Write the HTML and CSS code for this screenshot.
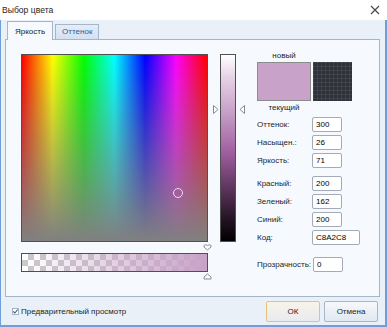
FILE: index.html
```html
<!DOCTYPE html>
<html lang="ru">
<head>
    <meta charset="UTF-8">
    <title>Выбор цвета</title>
    <link rel="stylesheet" href="styles.css">
</head>
<body>
    <div class="dialog">
        <div class="titlebar">
            <span class="title">Выбор цвета</span>
            <svg class="close" width="10" height="10" viewBox="0 0 10 10">
                <path d="M1 1 L9 9 M9 1 L1 9" stroke="#4a4a4a" stroke-width="1.2" fill="none"/>
            </svg>
        </div>

        <div class="window">
            <!-- Tabs -->
            <div class="tabs">
                <div class="tab active">Яркость</div>
                <div class="tab">Оттенок</div>
            </div>

            <div class="panel">
                <!-- Spectrum + alpha -->
                <div class="picker-col">
                    <div class="spectrum">
                        <span class="cursor"></span>
                    </div>
                    <div class="marker-row">
                        <svg class="marker-down" width="9" height="7" viewBox="0 0 9 7">
                            <path d="M1 1.5 Q2.5 0 4.5 1.5 Q6.5 0 8 1.5 L8 3 L4.5 6 L1 3 Z" stroke="#8a8a8a" fill="#fff"/>
                        </svg>
                    </div>
                    <div class="alpha"><div class="alpha-fill"></div></div>
                    <div class="marker-row">
                        <svg class="marker-up" width="9" height="7" viewBox="0 0 9 7">
                            <path d="M1 6 L8 6 L8 4 L4.5 1 L1 4 Z" stroke="#8a8a8a" fill="#fff"/>
                        </svg>
                    </div>
                </div>

                <!-- Luminance bar -->
                <div class="lum">
                    <svg class="lum-mark left" width="6" height="9" viewBox="0 0 6 9">
                        <path d="M0.5 0.5 L5 4.5 L0.5 8.5 Z" stroke="#8a8a8a" fill="#fff"/>
                    </svg>
                    <svg class="lum-mark right" width="6" height="9" viewBox="0 0 6 9">
                        <path d="M5.5 0.5 L1 4.5 L5.5 8.5 Z" stroke="#8a8a8a" fill="#fff"/>
                    </svg>
                </div>

                <!-- Values -->
                <div class="info-col">
                    <div class="swatch-label">новый</div>
                    <div class="swatches">
                        <div class="swatch new"></div>
                        <div class="swatch current"></div>
                    </div>
                    <div class="swatch-label">текущий</div>

                    <div class="fields">
                        <div class="row"><label>Оттенок:</label><input type="text" value="300"></div>
                        <div class="row"><label>Насыщен.:</label><input type="text" value="26"></div>
                        <div class="row"><label>Яркость:</label><input type="text" value="71"></div>
                        <div class="row group"><label>Красный:</label><input type="text" value="200"></div>
                        <div class="row"><label>Зеленый:</label><input type="text" value="162"></div>
                        <div class="row"><label>Синий:</label><input type="text" value="200"></div>
                        <div class="row"><label>Код:</label><input type="text" class="wide" value="C8A2C8"></div>
                        <div class="row group-wide"><label>Прозрачность:</label><input type="text" value="0"></div>
                    </div>
                </div>
            </div>

            <!-- Footer -->
            <div class="footer">
                <label class="preview"><span class="check"><svg width="5" height="5" viewBox="0 0 5 5"><path d="M0.3 2.4 L1.9 4 L4.7 0.6" stroke="#3c5a8a" stroke-width="1.1" fill="none"/></svg></span><span>Предварительный просмотр</span></label>
                <div class="buttons">
                    <button class="btn default">ОК</button>
                    <button class="btn">Отмена</button>
                </div>
            </div>
        </div>
    </div>
</body>
</html>
```

FILE: styles.css
```css
body {
    margin: 0;
    font-family: "Liberation Sans", Arial, sans-serif;
    font-size: 8px;
    color: #1e1e1e;
    background-color: #FFFFFF;
}
.dialog {
    width: 387px;
    height: 327px;
    display: flex;
    flex-direction: column;
}
.titlebar {
    height: 20px;
    display: flex;
    align-items: center;
    justify-content: space-between;
    padding: 0 7px 0 2px;
    background-color: #FFFFFF;
}
.title {
    font-size: 8.6px;
}
.window {
    flex: 1;
    display: flex;
    flex-direction: column;
    background-color: #eaf0f8;
    border: 1px solid #6f9fd9;
    border-top: none;
    border-width: 0 2px 2px 1px;
    padding: 2px 5px 0 4px;
}
.tabs {
    height: 17px;
    display: flex;
    align-items: flex-end;
    padding-left: 2px;
    position: relative;
    z-index: 1;
}
.tab {
    height: 15px;
    line-height: 14px;
    padding: 0 6px;
    box-sizing: border-box;
    border: 1px solid #a7b5c8;
    border-bottom: none;
    background: linear-gradient(#e4edf9, #d3e1f4);
    color: #2f5a98;
    margin-left: 2px;
}
.tab.active {
    height: 19px;
    line-height: 19px;
    margin-bottom: -1px;
    margin-left: 0;
    padding: 0 7px;
    background-color: #f6f9fd;
    background-image: none;
    color: #1e1e1e;
}
.panel {
    height: 258px;
    box-sizing: border-box;
    border: 1px solid #a7b5c8;
    background-color: #f6f9fd;
    padding: 14px 0 0 15px;
    display: flex;
    align-items: flex-start;
}
.picker-col {
    width: 187px;
}
.spectrum {
    width: 187px;
    height: 188px;
    box-sizing: border-box;
    border: 1px solid #505050;
    position: relative;
    background:
        linear-gradient(to bottom, rgba(128,128,128,0) 0%, rgba(128,128,128,1) 100%),
        linear-gradient(to right, #ff0000 0%, #ffff00 16.6%, #00ff00 33.3%, #00ffff 50%, #0000ff 66.6%, #ff00ff 83.3%, #ff0000 100%);
}
.cursor {
    position: absolute;
    left: 151px;
    top: 133px;
    width: 8px;
    height: 8px;
    border: 1px solid #f4dcf4;
    border-radius: 50%;
}
.marker-row {
    height: 11px;
    position: relative;
}
.marker-down {
    position: absolute;
    right: -4px;
    top: 2px;
}
.marker-up {
    position: absolute;
    right: -4px;
    top: 1px;
}
.alpha {
    height: 19px;
    box-sizing: border-box;
    border: 1px solid #505050;
    background-color: #FFFFFF;
    background-image:
        linear-gradient(45deg, #c9c9c9 25%, transparent 25%, transparent 75%, #c9c9c9 75%),
        linear-gradient(45deg, #c9c9c9 25%, transparent 25%, transparent 75%, #c9c9c9 75%);
    background-size: 12px 12px;
    background-position: 0 0, 6px 6px;
}
.alpha-fill {
    height: 100%;
    background: linear-gradient(to right, rgba(200,162,200,0) 0%, rgba(200,162,200,1) 100%);
}
.lum {
    width: 16px;
    height: 188px;
    box-sizing: border-box;
    margin-left: 12px;
    border: 1px solid #505050;
    position: relative;
    background: linear-gradient(to bottom, #ffffff 0%, #e6d2e6 12%, #c8a2c8 30%, #a060a0 52%, #5c345c 72%, #241424 88%, #000000 100%);
}
.lum-mark {
    position: absolute;
    top: 50px;
}
.lum-mark.left {
    left: -8px;
}
.lum-mark.right {
    right: -10px;
}
.info-col {
    margin-left: 21px;
    margin-top: -5px;
    width: 100px;
}
.swatch-label {
    width: 54px;
    height: 13px;
    line-height: 13px;
    text-align: center;
}
.swatches {
    display: flex;
}
.swatch {
    height: 39px;
    box-sizing: border-box;
}
.swatch.new {
    width: 54px;
    background-color: #c8a2c8;
    border: 1px solid #8c8c8c;
}
.swatch.current {
    width: 39px;
    margin-left: 2px;
    background-color: #2f323a;
    background-image:
        linear-gradient(rgba(255,255,255,0.07) 1px, transparent 1px),
        linear-gradient(90deg, rgba(255,255,255,0.07) 1px, transparent 1px);
    background-size: 4px 4px;
}
.fields {
    margin-top: 1px;
}
.row {
    height: 18px;
    display: flex;
    align-items: center;
}
.row.group {
    margin-top: 5px;
}
.row.group-wide {
    margin-top: 9px;
}
.row label {
    width: 55px;
    flex-shrink: 0;
    white-space: nowrap;
}
.row.group-wide label {
    width: 56px;
}
.row input {
    width: 30px;
    height: 15px;
    box-sizing: border-box;
    border: 1px solid #a3abb7;
    border-radius: 2px;
    background-color: #FFFFFF;
    font-family: inherit;
    font-size: 8px;
    padding: 0 3px;
    outline: none;
}
.row input.wide {
    width: 48px;
}
.footer {
    flex: 1;
    display: flex;
    align-items: center;
    justify-content: space-between;
}
.preview {
    display: flex;
    align-items: center;
    margin-left: 7px;
}
.check {
    width: 5px;
    height: 5px;
    border: 1px solid #a9b3c2;
    background-color: #FFFFFF;
    margin-right: 2px;
    display: flex;
}
.buttons {
    display: flex;
    margin-right: 2px;
}
.btn {
    width: 54px;
    height: 21px;
    margin-left: 4px;
    border: 1px solid #a9b6c8;
    border-radius: 2px;
    background: linear-gradient(#f6f8fb, #e1e8f1);
    font-family: inherit;
    font-size: 8px;
    color: #1e1e1e;
    padding: 0;
}
.btn.default {
    border-color: #e6c277;
    background: linear-gradient(#f9f4e8, #e8eaf0);
}
```
